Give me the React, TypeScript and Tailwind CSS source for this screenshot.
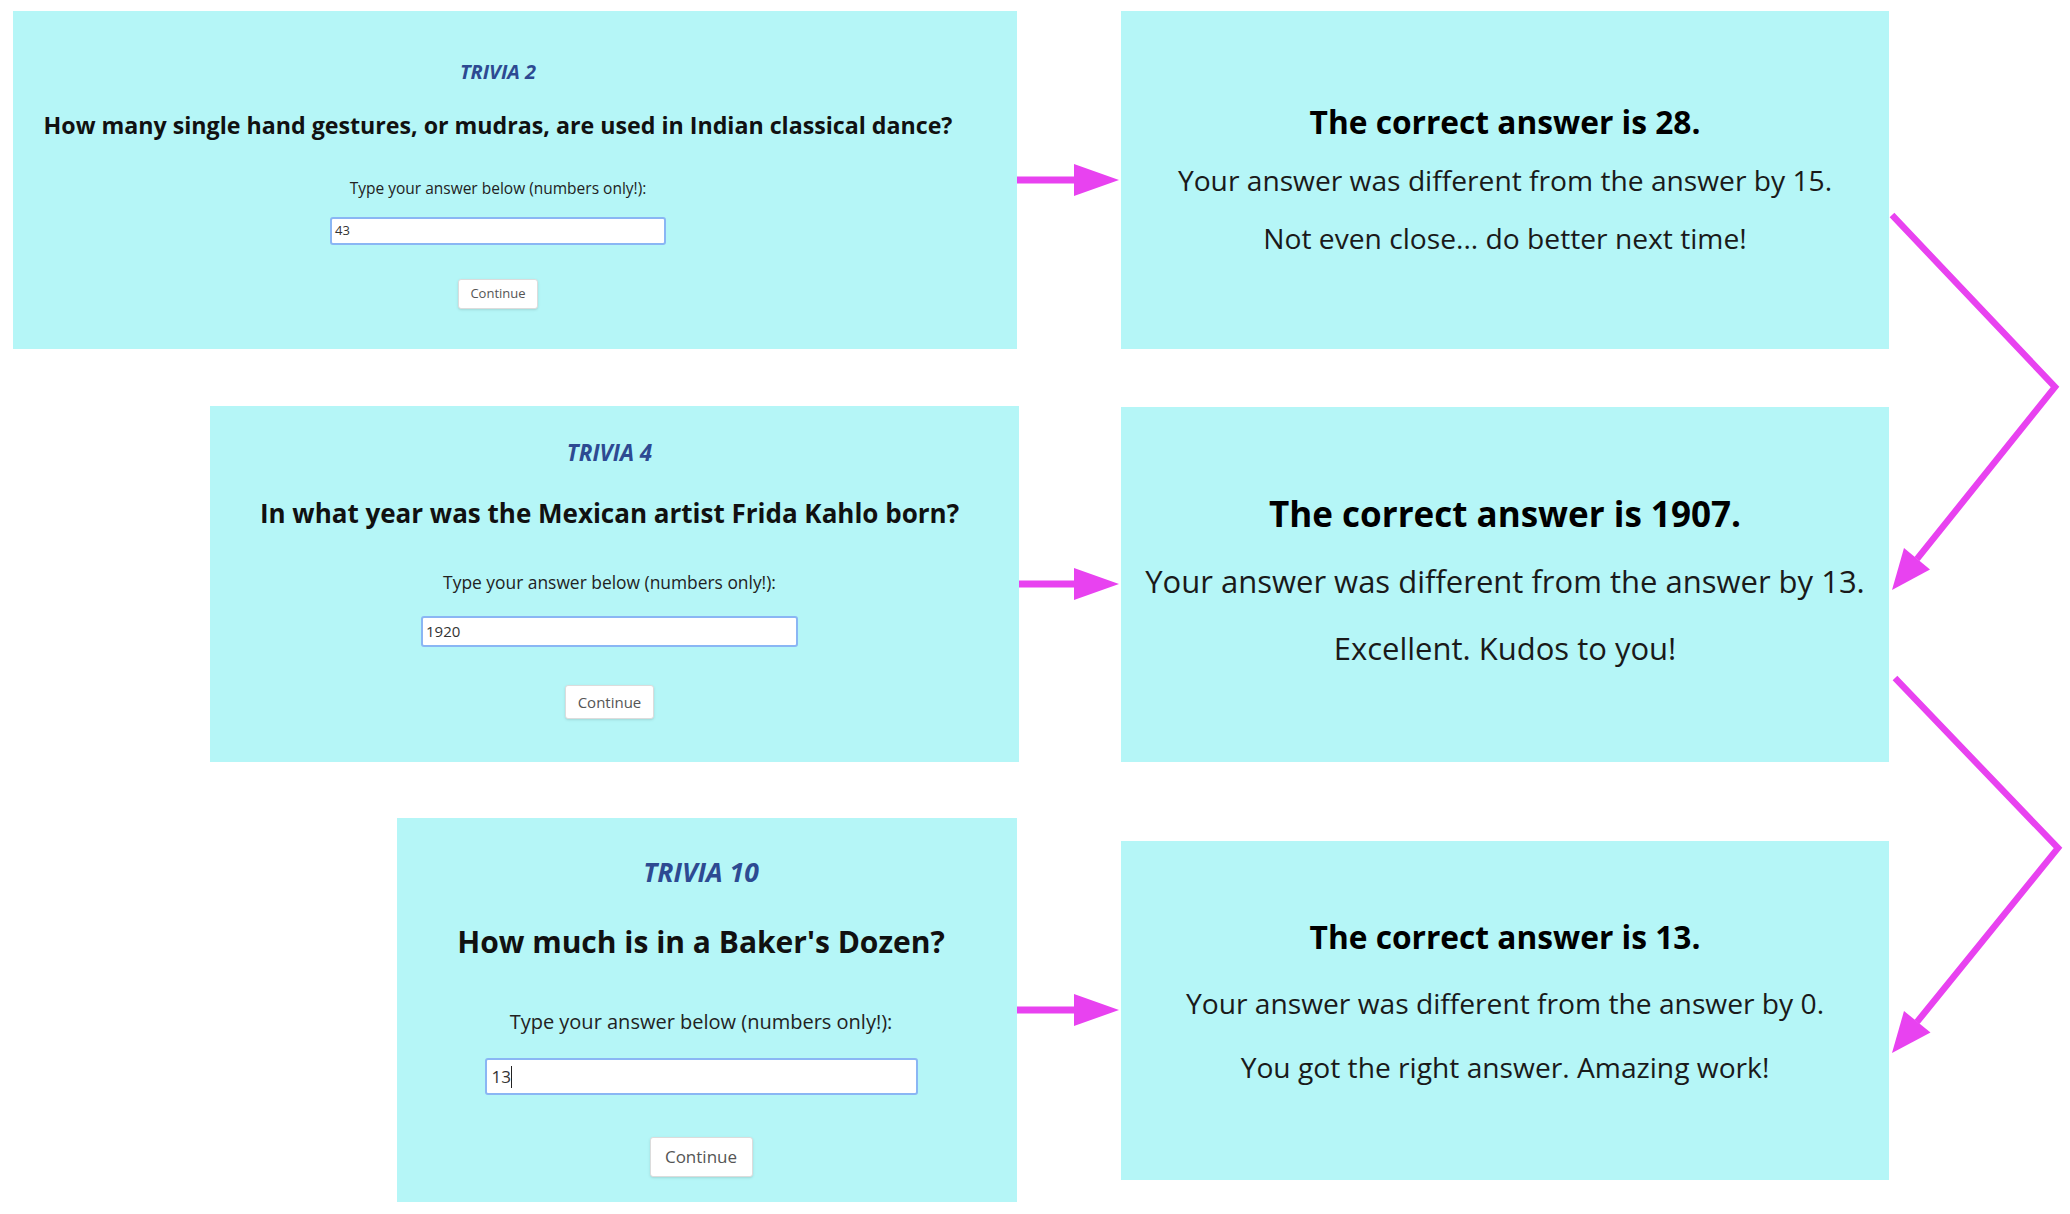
import React from 'react';

const MAGENTA = '#e842f0';

type ArrowProps = { width: number };

const ArrowRight: React.FC<ArrowProps> = ({ width }) => (
    <svg width={width} height={34} viewBox={`0 0 ${width} 34`} className="shrink-0">
        <rect x={0} y={13.5} width={width - 46} height={7} fill={MAGENTA} />
        <polygon points={`${width - 47},1 ${width - 2},17 ${width - 47},33`} fill={MAGENTA} />
    </svg>
);

// connectors between the result panels on the right
const Chevrons: React.FC = () => (
    <svg width={2070} height={1214} viewBox="0 0 2070 1214" className="absolute left-0 top-0 pointer-events-none">
        <polyline points="1892,215 2055,387 1917,559" fill="none" stroke={MAGENTA} strokeWidth={6.5} strokeLinejoin="miter" />
        <polygon points="1892,590 1930,569.5 1904,548" fill={MAGENTA} />
        <polyline points="1895,678 2058,848 1917,1022" fill="none" stroke={MAGENTA} strokeWidth={6.5} strokeLinejoin="miter" />
        <polygon points="1892,1053 1930.5,1032.5 1904,1011" fill={MAGENTA} />
    </svg>
);

const App: React.FC = () => {
    return (
        <div className="relative w-[2070px] h-[1214px] overflow-hidden bg-white font-['Open_Sans',sans-serif] pt-[11px]">
            {/* row 1 */}
            <div className="flex items-center pl-[13px]">
                <div className="w-[1004px] h-[338px] bg-[#b5f6f7] flex flex-col items-center pr-[34px] pt-[49px]">
                    <div className="text-[20px] leading-[24px] font-bold italic text-[#2d4a92]">TRIVIA 2</div>
                    <div className="mt-[26px] text-[23.2px] leading-[30px] font-bold text-[#111] whitespace-nowrap">
                        How many single hand gestures, or mudras, are used in Indian classical dance?
                    </div>
                    <div className="mt-[38px] text-[15.5px] leading-[20px] text-[#222]">Type your answer below (numbers only!):</div>
                    <div className="mt-[19px] w-[336px] h-[28px] bg-white border-2 border-[#8ab6f4] rounded-[3px] px-[3px] flex items-center text-[13px] text-[#333]">
                        43
                    </div>
                    <button className="mt-[34px] w-[80px] h-[30px] bg-white border border-[#dcdcdc] rounded-[3px] shadow-sm text-[13px] text-[#555]">
                        Continue
                    </button>
                </div>
                <ArrowRight width={104} />
                <div className="w-[768px] h-[338px] bg-[#b5f6f7] flex flex-col items-center pt-[89px] text-[#1a1a1a]">
                    <div className="text-[31.7px] leading-[44px] font-bold text-black">The correct answer is 28.</div>
                    <div className="mt-[16px] text-[28.2px] leading-[40px]">Your answer was different from the answer by 15.</div>
                    <div className="mt-[18px] text-[28.2px] leading-[40px]">Not even close... do better next time!</div>
                </div>
            </div>

            {/* row 2 */}
            <div className="flex items-center pl-[210px] mt-[57px]">
                <div className="w-[809px] h-[356px] bg-[#b5f6f7] flex flex-col items-center pr-[10px] pt-[33px]">
                    <div className="text-[22.4px] leading-[28px] font-bold italic text-[#2d4a92]">TRIVIA 4</div>
                    <div className="mt-[29px] text-[26px] leading-[34px] font-bold text-[#111] whitespace-nowrap">
                        In what year was the Mexican artist Frida Kahlo born?
                    </div>
                    <div className="mt-[40px] text-[17.4px] leading-[24px] text-[#222]">Type your answer below (numbers only!):</div>
                    <div className="mt-[22px] w-[377px] h-[31px] bg-white border-2 border-[#8ab6f4] rounded-[3px] px-[3px] flex items-center text-[15px] text-[#333]">
                        1920
                    </div>
                    <button className="mt-[38px] w-[89px] h-[34px] bg-white border border-[#dcdcdc] rounded-[3px] shadow-sm text-[15px] text-[#555]">
                        Continue
                    </button>
                </div>
                <ArrowRight width={102} />
                <div className="w-[768px] h-[355px] bg-[#b5f6f7] flex flex-col items-center pt-[83px] text-[#1a1a1a]">
                    <div className="text-[35px] leading-[48px] font-bold text-black">The correct answer is 1907.</div>
                    <div className="mt-[21px] text-[31px] leading-[44px] whitespace-nowrap">Your answer was different from the answer by 13.</div>
                    <div className="mt-[23px] text-[31px] leading-[44px]">Excellent. Kudos to you!</div>
                </div>
            </div>

            {/* row 3 */}
            <div className="flex items-center pl-[397px] mt-[56px]">
                <div className="w-[620px] h-[384px] bg-[#b5f6f7] flex flex-col items-center pr-[12px] pt-[38px]">
                    <div className="text-[26.5px] leading-[32px] font-bold italic text-[#2d4a92]">TRIVIA 10</div>
                    <div className="mt-[34px] text-[30px] leading-[40px] font-bold text-[#111] whitespace-nowrap">How much is in a Baker's Dozen?</div>
                    <div className="mt-[46px] text-[20px] leading-[28px] text-[#222]">Type your answer below (numbers only!):</div>
                    <div className="mt-[22px] w-[433px] h-[37px] bg-white border-2 border-[#8ab6f4] rounded-[3px] px-[5px] flex items-center text-[17px] text-[#333]">
                        13<span className="w-px h-[22px] bg-[#222]" />
                    </div>
                    <button className="mt-[42px] w-[103px] h-[40px] bg-white border border-[#dcdcdc] rounded-[3px] shadow-sm text-[17px] text-[#555]">
                        Continue
                    </button>
                </div>
                <ArrowRight width={104} />
                <div className="w-[768px] h-[339px] bg-[#b5f6f7] flex flex-col items-center pt-[74px] text-[#1a1a1a]">
                    <div className="text-[31.7px] leading-[44px] font-bold text-black">The correct answer is 13.</div>
                    <div className="mt-[24px] text-[28.2px] leading-[40px]">Your answer was different from the answer by 0.</div>
                    <div className="mt-[24px] text-[28.2px] leading-[40px]">You got the right answer. Amazing work!</div>
                </div>
            </div>

            <Chevrons />
        </div>
    );
};

export default App;
